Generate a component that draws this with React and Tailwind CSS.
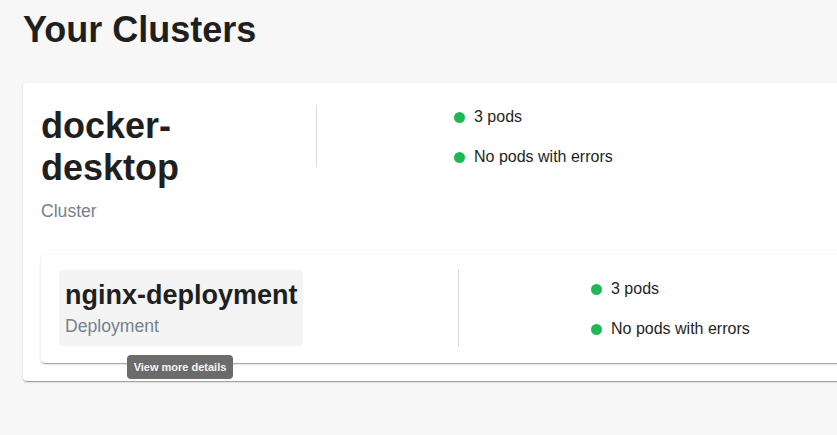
import React from "react";

const paperShadow =
  "shadow-[0px_2px_1px_-1px_rgba(0,0,0,0.2),0px_1px_1px_0px_rgba(0,0,0,0.14),0px_1px_3px_0px_rgba(0,0,0,0.12)]";

function Stat({ text }) {
  return (
    <div className="flex items-center h-[40px]">
      <span className="w-[11px] h-[11px] rounded-full bg-[#1fb857] shrink-0" />
      <span className="ml-[9px] text-[16px] leading-[18px] text-[#1f1f1f]">{text}</span>
    </div>
  );
}

export default function App() {
  return (
    <div
      className="w-[837px] h-[435px] overflow-hidden bg-[#f7f7f7] text-[#1f1f1f]"
      style={{ fontFamily: '"Liberation Sans", Arial, sans-serif' }}
    >
      <div className="pl-[23px] pt-[10px]">
        <h1 className="text-[36px] leading-[40px] font-bold text-[#1f1f1f]">Your Clusters</h1>
        <div className={`mt-[33px] w-[900px] bg-white rounded-[4px] ${paperShadow} pl-[18px] pt-[22px] pb-[18px]`}>
          <div className="flex">
            <div className="w-[275px]">
              <div className="text-[36px] leading-[42px] font-bold w-[200px]">docker-desktop</div>
              <div className="mt-[12px] text-[17.6px] leading-[20px] text-[#73838b]">Cluster</div>
            </div>
            <div className="w-px h-[62px] bg-[#dcdcdc]" />
            <div className="ml-[137px] -mt-[8px]">
              <Stat text="3 pods" />
              <Stat text="No pods with errors" />
            </div>
          </div>
          <div className={`mt-[34px] bg-white rounded-[4px] ${paperShadow} pl-[18px] pt-[15px] pb-[14px] flex`}>
            <div className="relative">
              <div className="w-[244px] h-[76px] bg-[#f4f4f4] rounded-[4px] pl-[6px] pt-[10px]">
                <div className="text-[27px] leading-[30px] font-bold">nginx-deployment</div>
                <div className="mt-[7px] text-[17.6px] leading-[19px] text-[#73838b]">Deployment</div>
              </div>
              <div className="absolute left-[68px] top-[85px] w-[106px] h-[24px] rounded-[4px] bg-[#6b6b6b] flex items-center justify-center text-[11px] font-bold text-[#f4f4f4] whitespace-nowrap z-10">
                View more details
              </div>
            </div>
            <div className="ml-[155px] -mt-[1px] w-px h-[78px] bg-[#dcdcdc]" />
            <div className="ml-[132px] -mt-[1px]">
              <Stat text="3 pods" />
              <Stat text="No pods with errors" />
            </div>
          </div>
        </div>
      </div>
    </div>
  );
}
